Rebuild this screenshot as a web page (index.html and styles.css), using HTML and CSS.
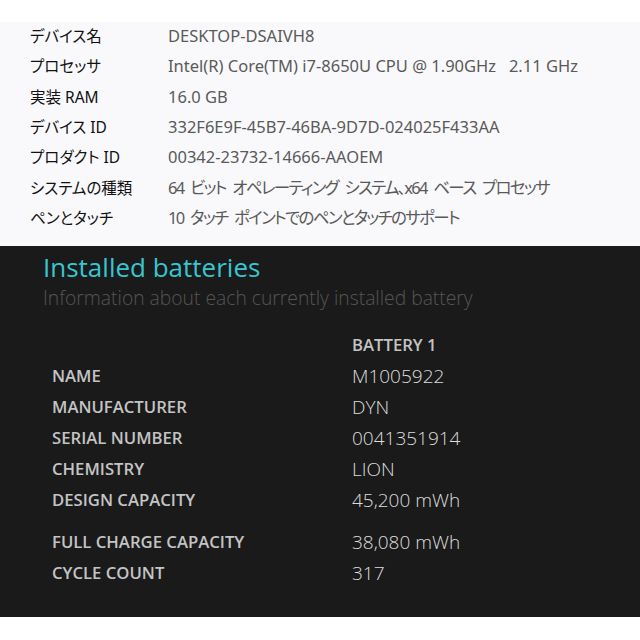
FILE: index.html
```html
<!DOCTYPE html>
<html lang="ja">
<head>
  <meta charset="UTF-8">
  <title>デバイスの仕様 / Battery report</title>
  <link rel="stylesheet" href="styles.css">
</head>
<body>
  <div class="specs">
    <div class="spec-row"><span class="spec-label">デバイス名</span><span class="spec-value">DESKTOP-DSAIVH8</span></div>
    <div class="spec-row"><span class="spec-label">プロセッサ</span><span class="spec-value">Intel(R) Core(TM) i7-8650U CPU @ 1.90GHz&nbsp;&nbsp;&nbsp;2.11 GHz</span></div>
    <div class="spec-row"><span class="spec-label">実装 RAM</span><span class="spec-value">16.0 GB</span></div>
    <div class="spec-row"><span class="spec-label">デバイス ID</span><span class="spec-value">332F6E9F-45B7-46BA-9D7D-024025F433AA</span></div>
    <div class="spec-row"><span class="spec-label">プロダクト ID</span><span class="spec-value">00342-23732-14666-AAOEM</span></div>
    <div class="spec-row"><span class="spec-label">システムの種類</span><span class="spec-value ja">64 ビット オペレーティング システム、x64 ベース プロセッサ</span></div>
    <div class="spec-row"><span class="spec-label">ペンとタッチ</span><span class="spec-value ja">10 タッチ ポイントでのペンとタッチのサポート</span></div>
  </div>

  <div class="report">
    <h2 class="report-title">Installed batteries</h2>
    <div class="report-sub">Information about each currently installed battery</div>

    <div class="battery-table">
      <div class="bt-row"><span class="bt-label"></span><span class="bt-head">BATTERY 1</span></div>
      <div class="bt-row"><span class="bt-label">NAME</span><span class="bt-value">M1005922</span></div>
      <div class="bt-row"><span class="bt-label">MANUFACTURER</span><span class="bt-value">DYN</span></div>
      <div class="bt-row"><span class="bt-label">SERIAL NUMBER</span><span class="bt-value">0041351914</span></div>
      <div class="bt-row"><span class="bt-label">CHEMISTRY</span><span class="bt-value">LION</span></div>
      <div class="bt-row"><span class="bt-label">DESIGN CAPACITY</span><span class="bt-value">45,200 mWh</span></div>
      <div class="bt-row spaced"><span class="bt-label">FULL CHARGE CAPACITY</span><span class="bt-value">38,080 mWh</span></div>
      <div class="bt-row"><span class="bt-label">CYCLE COUNT</span><span class="bt-value">317</span></div>
    </div>
  </div>
</body>
</html>
```

FILE: styles.css
```css
html, body {
  margin: 0;
  padding: 0;
  background: #ffffff;
  width: 640px;
  height: 640px;
  overflow: hidden;
}
.specs {
  margin-top: 22px;
  height: 224px;
  box-sizing: border-box;
  background: #f9f9fb;
  padding-left: 30px;
  font-family: "Noto Sans", "Noto Sans CJK JP", sans-serif;
  font-size: 15.5px;
  font-feature-settings: "palt";
}
.spec-row {
  display: flex;
  height: 30.3px;
  padding-bottom: 3px;
  box-sizing: border-box;
  align-items: center;
}
.spec-label {
  width: 138px;
  color: #111111;
}
.spec-value {
  font-size: 16.5px;
  color: #5a5a5a;
}
.spec-value.ja {
  letter-spacing: -1.7px;
  word-spacing: 4px;
}
.report {
  background: #1a1a1a;
  height: 371px;
  box-sizing: border-box;
  padding: 6px 0 0 43px;
  font-family: "Open Sans", "Noto Sans", sans-serif;
}
.report-title {
  margin: 0;
  font-size: 26px;
  font-weight: 500;
  line-height: 30px;
  color: #38c6d1;
}
.report-sub {
  margin-top: 3px;
  font-size: 19.3px;
  font-weight: 300;
  line-height: 26px;
  color: #555555;
}
.battery-table {
  margin: 18px 0 0 9px;
}
.bt-row {
  display: flex;
  align-items: center;
  height: 31px;
}
.bt-row.spaced {
  margin-top: 11px;
}
.bt-label {
  width: 300px;
  font-size: 16.7px;
  font-weight: 600;
  color: #c4c4c4;
}
.bt-head {
  font-size: 16.7px;
  font-weight: 600;
  color: #c4c4c4;
}
.bt-value {
  font-size: 19px;
  font-weight: 300;
  color: #dddddd;
}
```
